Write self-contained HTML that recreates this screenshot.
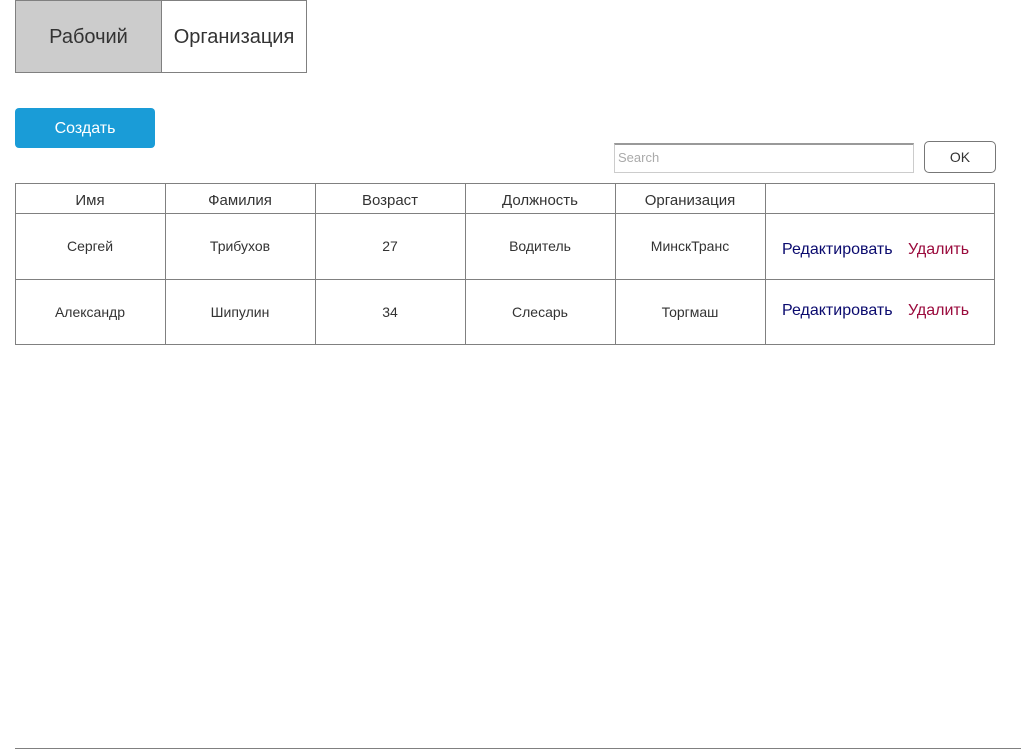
<!DOCTYPE html>
<html><head><meta charset="utf-8"><style>
*{margin:0;padding:0;box-sizing:border-box}
body{width:1021px;height:750px;background:#fff;position:relative;font-family:"Liberation Sans",Arial,sans-serif;color:#333;overflow:hidden}
.a{position:absolute}
.c{display:flex;align-items:center;justify-content:center}
</style></head><body>
<div class="a c" style="left:15px;top:0;width:147px;height:73px;background:#ccc;border:1px solid #808080;font-size:20px;padding-top:2px">Рабочий</div>
<div class="a c" style="left:161px;top:0;width:146px;height:73px;background:#fff;border:1px solid #808080;font-size:20px;padding-top:2px">Организация</div>
<div class="a c" style="left:15px;top:108px;width:140px;height:40px;background:#1a9cd7;border-radius:4px;color:#fff;font-size:16px;padding-top:2px">Создать</div>
<div class="a" style="left:614px;top:143px;width:300px;height:30px;border:1px solid #ccc;border-top:2px solid #999;font-size:13px;color:#aaa;padding:5px 0 0 3px">Search</div>
<div class="a c" style="left:924px;top:141px;width:72px;height:32px;border:1px solid #777;border-radius:5px;font-size:14px">OK</div>
<div class="a" style="left:15px;top:183px;width:980px;height:162px;border:1px solid #808080"></div>
<div class="a" style="left:15px;top:213px;width:980px;height:1px;background:#808080"></div>
<div class="a" style="left:15px;top:279px;width:980px;height:1px;background:#808080"></div>
<div class="a" style="left:165px;top:183px;width:1px;height:162px;background:#808080"></div>
<div class="a" style="left:315px;top:183px;width:1px;height:162px;background:#808080"></div>
<div class="a" style="left:465px;top:183px;width:1px;height:162px;background:#808080"></div>
<div class="a" style="left:615px;top:183px;width:1px;height:162px;background:#808080"></div>
<div class="a" style="left:765px;top:183px;width:1px;height:162px;background:#808080"></div>
<div class="a c" style="left:15px;top:190px;width:150px;height:20px;font-size:15px">Имя</div>
<div class="a c" style="left:165px;top:190px;width:150px;height:20px;font-size:15px">Фамилия</div>
<div class="a c" style="left:315px;top:190px;width:150px;height:20px;font-size:15px">Возраст</div>
<div class="a c" style="left:465px;top:190px;width:150px;height:20px;font-size:15px">Должность</div>
<div class="a c" style="left:615px;top:190px;width:150px;height:20px;font-size:15px">Организация</div>
<div class="a c" style="left:15px;top:236px;width:150px;height:20px;font-size:14px">Сергей</div>
<div class="a c" style="left:165px;top:236px;width:150px;height:20px;font-size:14px">Трибухов</div>
<div class="a c" style="left:315px;top:236px;width:150px;height:20px;font-size:14px">27</div>
<div class="a c" style="left:465px;top:236px;width:150px;height:20px;font-size:14px">Водитель</div>
<div class="a c" style="left:615px;top:236px;width:150px;height:20px;font-size:14px">МинскТранс</div>
<div class="a c" style="left:15px;top:302px;width:150px;height:20px;font-size:14px">Александр</div>
<div class="a c" style="left:165px;top:302px;width:150px;height:20px;font-size:14px">Шипулин</div>
<div class="a c" style="left:315px;top:302px;width:150px;height:20px;font-size:14px">34</div>
<div class="a c" style="left:465px;top:302px;width:150px;height:20px;font-size:14px">Слесарь</div>
<div class="a c" style="left:615px;top:302px;width:150px;height:20px;font-size:14px">Торгмаш</div>
<div class="a" style="left:782px;top:241px;font-size:16px;color:#0a0a6e">Редактировать</div>
<div class="a" style="left:908px;top:241px;font-size:16px;color:#9a0a3c">Удалить</div>
<div class="a" style="left:782px;top:302px;font-size:16px;color:#0a0a6e">Редактировать</div>
<div class="a" style="left:908px;top:302px;font-size:16px;color:#9a0a3c">Удалить</div>
<div class="a" style="left:15px;top:748px;width:1006px;height:1px;background:#808080"></div>
</body></html>
